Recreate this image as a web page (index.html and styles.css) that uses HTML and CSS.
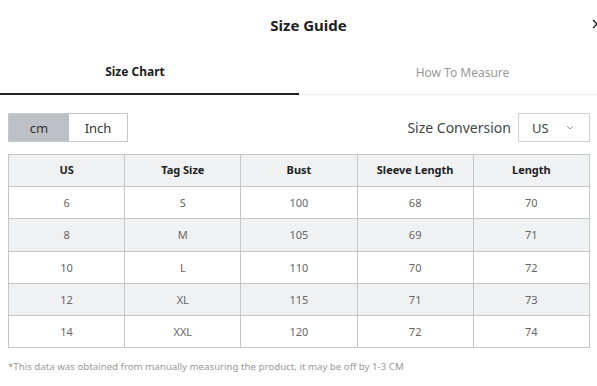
FILE: index.html
```
<!DOCTYPE html>
<html>
<head>
    <title>Size Guide</title>
    <meta charset="UTF-8">
    <meta name="viewport" content="width=device-width, initial-scale=1.0">
    <link rel="stylesheet" href="styles.css">
</head>
<body>
    <div class="modal">
        <header class="modal-header">
            <h1>Size Guide</h1>
            <svg class="close" width="10" height="10" viewBox="0 0 10 10"><path d="M1 1l8 8M9 1l-8 8" stroke="#222" stroke-width="1.4"/></svg>
        </header>

        <nav class="tabs">
            <div class="tab active">Size Chart</div>
            <div class="tab">How To Measure</div>
        </nav>

        <section class="content">
            <div class="toolbar">
                <div class="unit-toggle">
                    <span class="unit selected">cm</span>
                    <span class="unit">Inch</span>
                </div>
                <div class="conversion">
                    <span>Size Conversion</span>
                    <div class="select">
                        <span>US</span>
                        <svg width="8" height="5" viewBox="0 0 8 5"><path d="M1 1l3 3 3-3" fill="none" stroke="#999" stroke-width="1"/></svg>
                    </div>
                </div>
            </div>

            <table class="size-table">
                <thead>
                    <tr>
                        <th>US</th>
                        <th>Tag Size</th>
                        <th>Bust</th>
                        <th>Sleeve Length</th>
                        <th>Length</th>
                    </tr>
                </thead>
                <tbody>
                    <tr><td>6</td><td>S</td><td>100</td><td>68</td><td>70</td></tr>
                    <tr><td>8</td><td>M</td><td>105</td><td>69</td><td>71</td></tr>
                    <tr><td>10</td><td>L</td><td>110</td><td>70</td><td>72</td></tr>
                    <tr><td>12</td><td>XL</td><td>115</td><td>71</td><td>73</td></tr>
                    <tr><td>14</td><td>XXL</td><td>120</td><td>72</td><td>74</td></tr>
                </tbody>
            </table>

            <p class="note">*This data was obtained from manually measuring the product, it may be off by 1-3 CM</p>
        </section>
    </div>
</body>
</html>
```

FILE: styles.css
```
* { margin: 0; padding: 0; box-sizing: border-box; }

body {
    font-family: "Noto Sans", "Open Sans", sans-serif;
    background: #fff;
    color: #222;
    overflow: hidden;
}

.modal {
    width: 597px;
}

.modal-header {
    position: relative;
    height: 50px;
    display: flex;
    align-items: center;
    justify-content: center;
    padding-left: 20px;
}

.modal-header h1 {
    font-size: 15px;
    font-weight: 700;
    color: #222;
}

.close {
    position: absolute;
    right: -5px;
    top: 19px;
}

.tabs {
    display: flex;
    height: 45px;
}

.tab {
    flex: 0 0 299px;
    display: flex;
    align-items: center;
    justify-content: center;
    font-size: 12px;
    color: #999;
    border-bottom: 1px solid #eee;
    padding-left: 28px;
}

.tab.active {
    flex-basis: 299px;
    padding-left: 0;
    padding-right: 29px;
    color: #222;
    font-weight: 700;
    border-bottom: 2px solid #222;
}

.content {
    padding: 18px 7px 0 8px;
}

.toolbar {
    display: flex;
    justify-content: space-between;
    align-items: center;
    margin-bottom: 12px;
}

.unit-toggle {
    display: flex;
    border: 1px solid #c8c8c8;
    height: 29px;
}

.unit {
    display: flex;
    align-items: center;
    justify-content: center;
    font-size: 13px;
    color: #333;
}

.unit.selected {
    width: 60px;
    background: #bdc0c4;
}

.unit:last-child {
    width: 58px;
}

.conversion {
    display: flex;
    align-items: center;
    gap: 7px;
    font-size: 14px;
    color: #444;
}

.select {
    width: 72px;
    height: 29px;
    border: 1px solid #d0d0d0;
    display: flex;
    align-items: center;
    justify-content: space-between;
    padding: 0 15px 0 13px;
    font-size: 13px;
    color: #444;
}

.size-table {
    width: 582px;
    border-collapse: collapse;
    table-layout: fixed;
}

.size-table th, .size-table td {
    border: 1px solid #c6c6c6;
    height: 32.2px;
    padding: 0;
    text-align: center;
    font-size: 11px;
}

.size-table th {
    background: #f0f1f3;
    color: #222;
    font-weight: 700;
    padding-bottom: 2px;
}

.size-table td {
    color: #666;
}

.size-table tbody tr:nth-child(even) td {
    background: #f0f1f3;
}

.note {
    margin-top: 12px;
    font-size: 9.7px;
    color: #999;
}
```
